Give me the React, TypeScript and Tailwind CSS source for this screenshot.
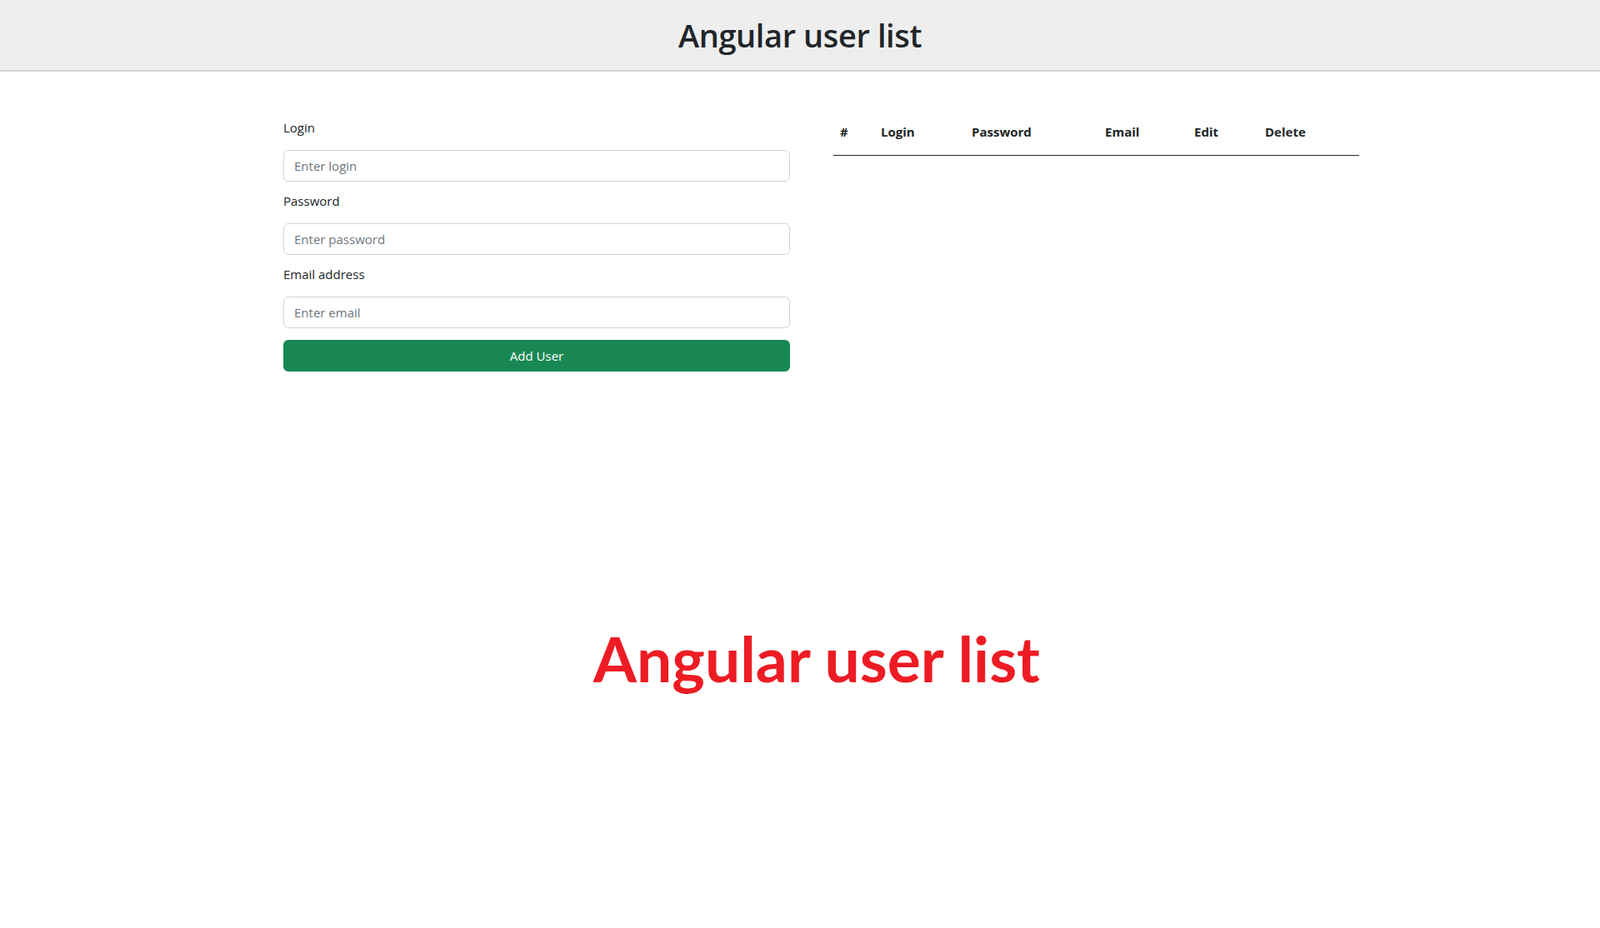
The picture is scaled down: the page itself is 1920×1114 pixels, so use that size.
import React from 'react'

const columns = [
  { label: '#', w: 'w-[49px]' },
  { label: 'Login', w: 'w-[109px]' },
  { label: 'Password', w: 'w-[160px]' },
  { label: 'Email', w: 'w-[107px]' },
  { label: 'Edit', w: 'w-[85px]' },
  { label: 'Delete', w: 'w-[121px]' },
]

const fields = [
  { label: 'Login', placeholder: 'Enter login', type: 'text' },
  { label: 'Password', placeholder: 'Enter password', type: 'password' },
  { label: 'Email address', placeholder: 'Enter email', type: 'email' },
]

export default function App() {
  return (
    <div className="min-h-screen bg-white text-[#212529] font-['Open_Sans',sans-serif]">
      {/* Header */}
      <header className="h-[86px] bg-[#eeeeee] border-b-2 border-[#d3d3d3] flex items-center justify-center">
        <h1 className="text-[38px] font-semibold leading-none tracking-[-0.4px]">Angular user list</h1>
      </header>

      <div className="flex pl-[340px]">
        {/* Form */}
        <form className="w-[608px] pt-[55px]" onSubmit={(e) => e.preventDefault()}>
          {fields.map((f) => (
            <div key={f.label} className="mb-[11px]">
              <label className="block text-[15px] leading-6 mb-[15px]">{f.label}</label>
              <input
                type={f.type}
                placeholder={f.placeholder}
                className="w-full h-[38px] px-3 text-[15px] border border-[#ced4da] rounded-md placeholder:text-[#6c757d] outline-none"
              />
            </div>
          ))}
          <button
            type="submit"
            className="w-full h-[38px] mt-[3px] bg-[#198754] text-white text-[15px] rounded-md"
          >
            Add User
          </button>
        </form>

        {/* Table */}
        <div className="ml-[52px] pt-[53px]">
          <table className="w-[631px] table-fixed border-collapse">
            <thead>
              <tr className="border-b border-[#212529]">
                {columns.map((c) => (
                  <th key={c.label} className={`${c.w} text-left font-bold text-[15px] leading-6 pl-2 pt-[7px] pb-[16px]`}>
                    {c.label}
                  </th>
                ))}
              </tr>
            </thead>
            <tbody />
          </table>
        </div>
      </div>

      <div className="flex justify-center pl-[40px] mt-[307px]">
        <p className="font-['Lato',sans-serif] font-bold text-[75px] leading-[75px] text-[#ed1c24]">
          Angular user list
        </p>
      </div>
    </div>
  )
}
